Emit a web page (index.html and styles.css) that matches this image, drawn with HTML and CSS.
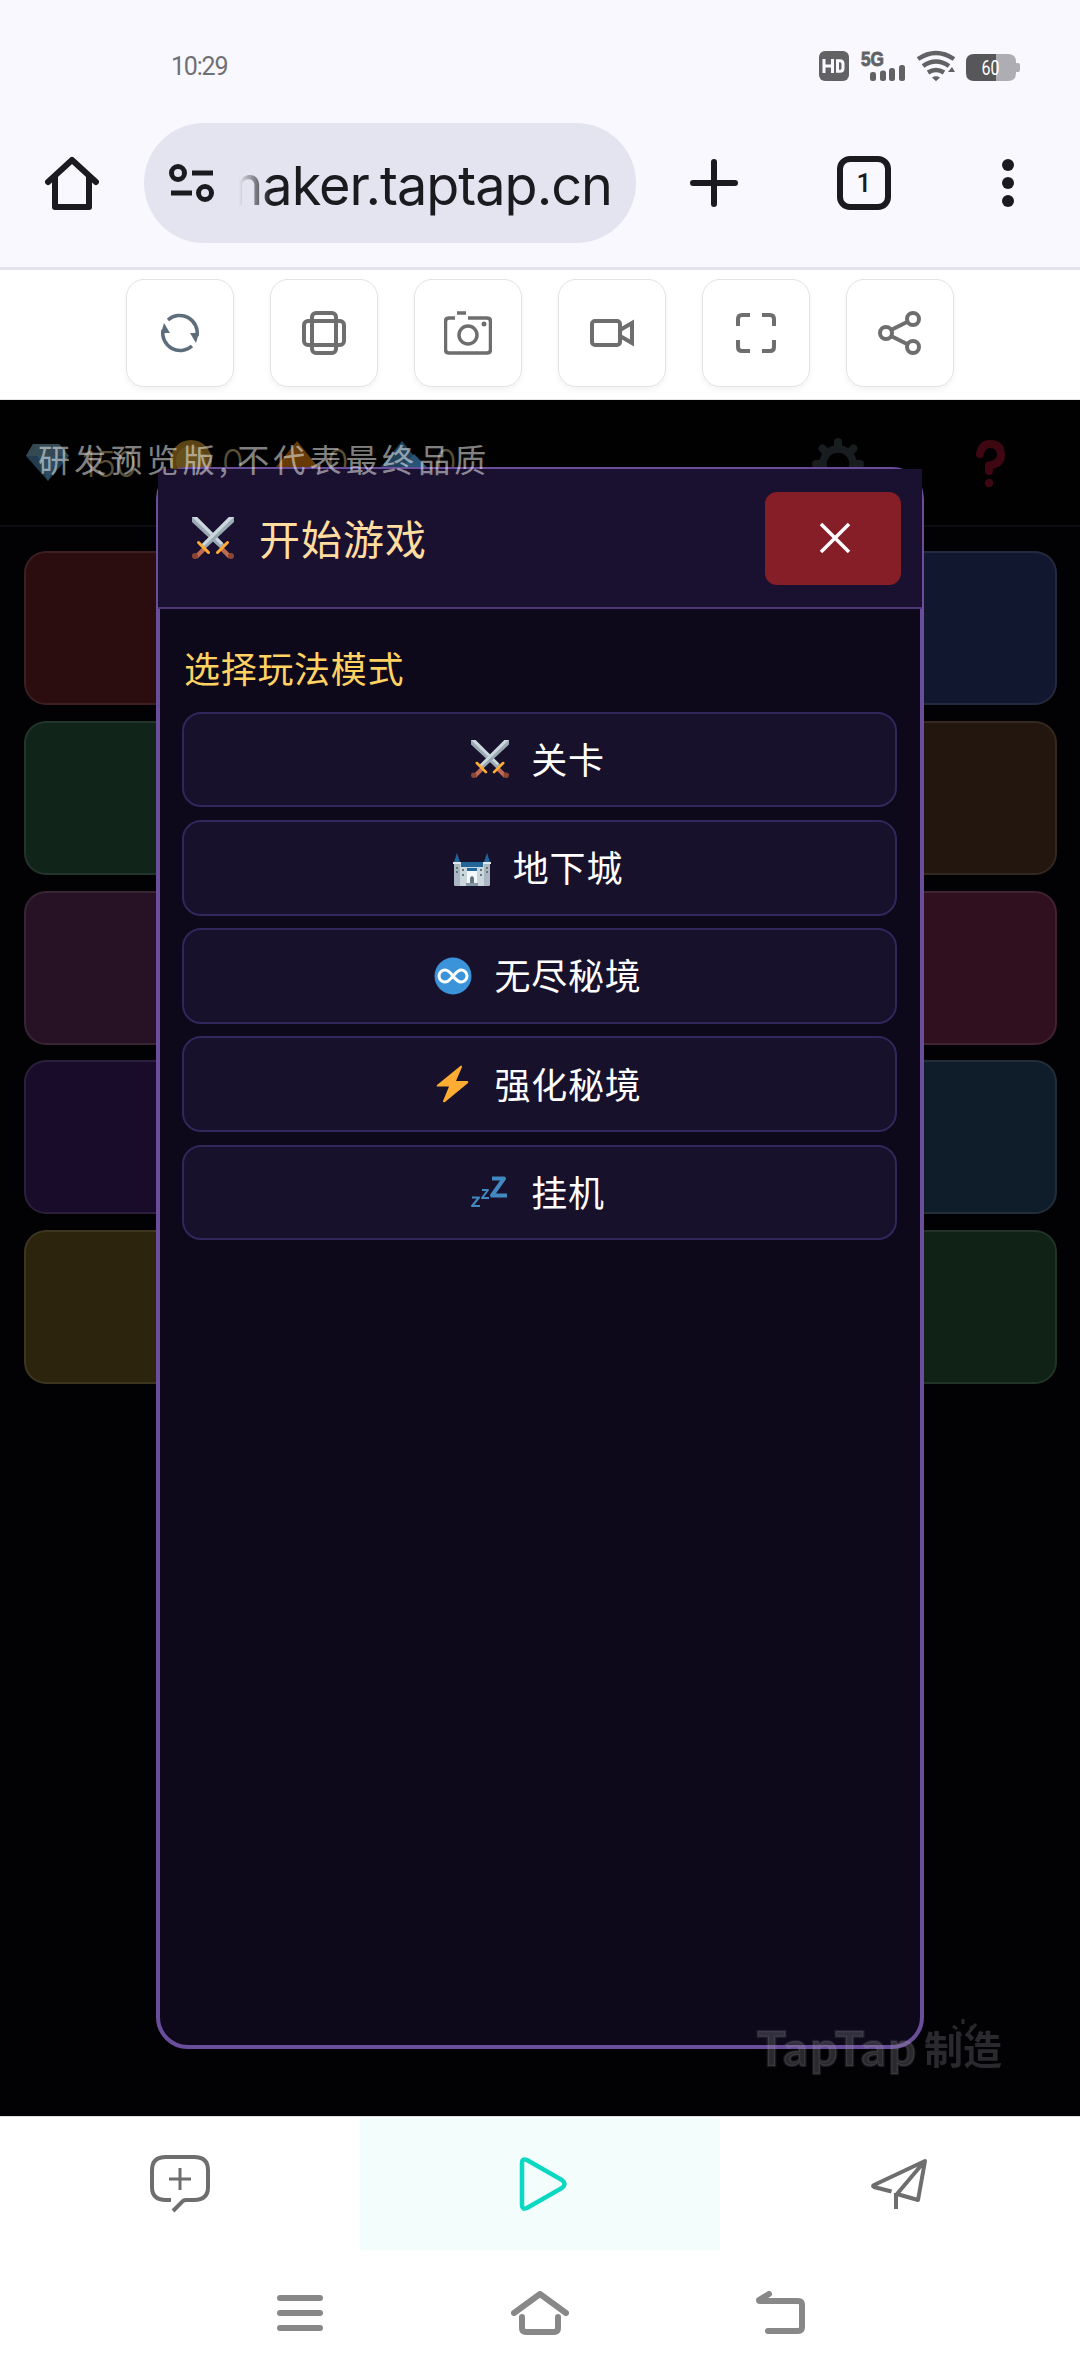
FILE: index.html
```html
<!DOCTYPE html>
<html lang="zh-CN">
<head>
<meta charset="utf-8">
<title>开始游戏</title>
<link rel="stylesheet" href="styles.css">
</head>
<body>
<svg width="0" height="0" class="defs">
  <symbol id="swords" viewBox="0 0 42 42">
    <path d="M0 0h5L33 28l-4 4L0 5z" fill="#9aaab4"/><path d="M0 0h5L31 26l-2 2z" fill="#ccd6dd"/>
    <path d="M42 0h-5L9 28l4 4L42 5z" fill="#9aaab4"/><path d="M42 0h-5L9 28l2 2z" fill="#ccd6dd"/>
    <path d="M12 32l-8 8M30 32l8 8" stroke="#bf6952" stroke-width="4.5"/>
    <path d="M6.500 25.500l10 10M35.500 25.500l-10 10" stroke="#ffac33" stroke-width="3" stroke-linecap="round"/>
    <circle cx="3" cy="39" r="3" fill="#8a4633"/><circle cx="39" cy="39" r="3" fill="#8a4633"/>
  </symbol>
</svg>

<header class="status">
  <time class="clock">10:29</time>
  <svg class="status-icons" viewBox="0 0 204 32" width="204" height="32">
    <g fill="#626264">
      <rect x="1" y="1" width="30" height="30" rx="6"/>
      <path d="M6 9v14M14.500 9v14M6 16h8.500M19.500 10.700h2.500q3 0 3 3v4.600q0 3-3 3h-2.500z" fill="none" stroke="#f9f8ff" stroke-width="3"/>
      <text x="43" y="15.500" class="net" textLength="23" lengthAdjust="spacingAndGlyphs">5G</text>
      <rect x="52" y="22" width="6" height="9" rx="2.500"/><rect x="62" y="20.500" width="6" height="10.500" rx="2.500"/><rect x="71" y="18" width="6" height="13" rx="2.500"/><rect x="81" y="15" width="6" height="16" rx="2.500"/>
      <path d="M100 9q18-12 36 0M105 16q13-9 26 0M110 22.500q8-5 16 0" fill="none" stroke="#626264" stroke-width="4.500"/>
      <path d="M114 27.500q4-2.500 8 0l-4 3.800z"/><path d="M130 22l4-5 3 5z"/>
    </g>
    <path d="M157 4h33q8 0 8 8v11q0 8-8 8h-33z" fill="#aeadb3"/><rect x="197" y="13" width="5" height="9" rx="2" fill="#aeadb3"/>
    <path d="M178 4h-22q-8 0-8 8v11q0 8 8 8h22z" fill="#575759"/>
    <text x="163.500" y="24.500" class="charge" textLength="18" lengthAdjust="spacingAndGlyphs">60</text>
  </svg>
</header>

<nav class="browser">
  <svg class="i-home" viewBox="0 0 54 54" width="54" height="54"><path d="M3 26L27 4l24 22M10 21v30h34V21" class="ink"/></svg>
  <div class="address">
    <svg viewBox="0 0 46 40" width="46" height="40"><g class="ink thin"><circle cx="9" cy="10" r="6.500"/><path d="M23 10h21M2 30h21"/><circle cx="36" cy="30" r="6.500"/></g></svg>
    <div class="url"><span>maker.taptap.cn</span></div>
  </div>
  <svg class="i-plus" viewBox="0 0 48 48" width="48" height="48"><path d="M24 3v42M3 24h42" class="ink"/></svg>
  <div class="tabs">1</div>
  <svg class="i-more" viewBox="0 0 12 50" width="12" height="50"><g fill="#1b1b1f"><circle cx="6" cy="7" r="6"/><circle cx="6" cy="25" r="6"/><circle cx="6" cy="43" r="6"/></g></svg>
</nav>

<div class="tools">
  <button class="tool"><svg viewBox="0 0 48 48" width="48" height="48"><g fill="none" stroke="#5d6d7b" stroke-width="3.500"><path d="M12 11A17.500 17.500 0 0 1 41 27M36 37A17.500 17.500 0 0 1 7 21"/></g><path d="M34 24h9l-3 10zM14 24H5l3-10z" fill="#5d6d7b"/></svg></button>
  <button class="tool"><svg viewBox="0 0 48 48" width="48" height="48"><g class="gray"><rect x="4" y="12" width="40" height="24" rx="4"/><rect x="12" y="4" width="24" height="40" rx="4"/><path d="M12 12h24v24H12z"/></g></svg></button>
  <button class="tool"><svg viewBox="0 0 48 48" width="48" height="48"><g class="gray slim"><path d="M11 9H5q-3.500 0-3.500 3.500v28q0 3.500 3.500 3.500h38q3.500 0 3.500-3.500v-28Q46.500 9 43 9H24M13 4h9"/><circle cx="24" cy="26" r="9"/></g><circle cx="40" cy="15" r="2.500" fill="#6e6e6e"/></svg></button>
  <button class="tool"><svg viewBox="0 0 48 48" width="48" height="48"><g class="gray"><rect x="4" y="12" width="28" height="24" rx="3"/><path d="M32 21l12-7v20l-12-7"/></g></svg></button>
  <button class="tool"><svg viewBox="0 0 48 48" width="48" height="48"><path class="gray" d="M6 17V10q0-4 4-4h8M30 6h8q4 0 4 4v7M42 31v7q0 4-4 4h-8M18 42h-8q-4 0-4-4v-7"/></svg></button>
  <button class="tool"><svg viewBox="0 0 48 48" width="48" height="48"><g class="gray"><circle cx="10" cy="24" r="6"/><circle cx="37" cy="10" r="6"/><circle cx="37" cy="38" r="6"/><path d="M15 21l17-8.500M15 27l17 8.500"/></g></svg></button>
</div>

<main class="game">
  <div class="hud">
    <svg class="res" viewBox="0 0 470 60" width="470" height="60">
      <path d="M13 14h26l10 12-21 25L6 26z" fill="#233d4e"/><path d="M13 14h26l10 12H6z" fill="#344951"/><path d="M18 26l10 25 10-25z" fill="#2c4d63"/>
      <circle cx="171" cy="31" r="21" fill="#5c4316"/><circle cx="171" cy="31" r="15" fill="#66501c"/>
      <path d="M277 11l21 26h-42z" fill="#673b08"/><path d="M382 11l21 26h-42z" fill="#1f415a"/><path d="M394 24l13 13h-24z" fill="#285575"/>
      <g class="amount"><text x="62" y="47" textLength="55" lengthAdjust="spacingAndGlyphs">150</text><text x="202" y="45">0</text><text x="307" y="45">0</text><text x="415" y="45">0</text></g>
    </svg>
    <svg class="gear" viewBox="-26 -26 52 52" width="52" height="52"><circle r="15" fill="none" stroke="#181d1f" stroke-width="7.500"/><path d="M0-22V-17M0 22V17M-22 0h5M22 0h-5M-15.500-15.500l4 4M15.500-15.500l-4 4M-15.500 15.500l4-4M15.500 15.500l-4-4" stroke="#181d1f" stroke-width="8" stroke-linecap="round"/></svg>
    <svg class="help" viewBox="0 0 32 50" width="32" height="50"><path d="M5 15Q7 5 15 5q11 0 11 11 0 9-12 10.500V32" fill="none" stroke="#3f0711" stroke-width="8" stroke-linecap="round" stroke-linejoin="round"/><circle cx="14" cy="44" r="4.300" fill="#3f0711"/></svg>
  </div>
  <div class="cards">
    <i class="red"></i><i class="navy"></i>
    <i class="green"></i><i class="brown"></i>
    <i class="plum"></i><i class="wine"></i>
    <i class="violet"></i><i class="teal"></i>
    <i class="olive"></i><i class="forest"></i>
  </div>

  <section class="modal">
    <div class="modal-head">
      <svg width="42" height="42"><use href="#swords"/></svg>
      <h1>开始游戏</h1>
      <button class="close"><svg viewBox="0 0 32 32" width="32" height="32"><path d="M2 2l28 28M30 2L2 30" stroke="#fff" stroke-width="3.500"/></svg></button>
    </div>
    <div class="modal-body">
      <h2>选择玩法模式</h2>
      <button class="mode"><svg width="38" height="38"><use href="#swords"/></svg><span>关卡</span></button>
      <button class="mode"><svg viewBox="0 0 38 38" width="38" height="38"><path d="M1 13h36v22q0 2-2 2H3q-2 0-2-2z" fill="#ccd6dd"/><path d="M1 15h6v22H3q-2 0-2-2zM31 15h6v20q0 2-2 2h-4z" fill="#aab8c2"/><path d="M8 13h22v5H8z" fill="#226699"/><path d="M1 13L4 4l3 9zM31 13l3-9 3 9z" fill="#226699"/><path d="M0 13h8v2H0zM30 13h8v2h-8z" fill="#e1e8ed"/><path d="M14 22h10v12H14z" fill="#f5f8fa"/><path d="M14 19h10v3H14z" fill="#226699"/><path d="M17 34v-5q2-4 4 0v5z" fill="#66757f"/><path d="M13 34h12v3H13z" fill="#8899a6"/><path d="M3 18h2v2H3zM3 22h2v2H3zM9 20h2v2H9zM9 25h2v2H9zM27 20h2v2h-2zM27 25h2v2h-2zM33 18h2v2h-2zM33 22h2v2h-2z" fill="#66757f"/></svg><span>地下城</span></button>
      <button class="mode"><svg viewBox="0 0 38 38" width="38" height="38"><circle cx="19" cy="19" r="18.500" fill="#3b94d9"/><path d="M19 19c-3-4-5-6-8-6a6 6 0 0 0 0 12c4 0 5-3 8-6s5-6 8-6a6 6 0 0 1 0 12c-3 0-5-2-8-6z" fill="none" stroke="#fff" stroke-width="3"/></svg><span>无尽秘境</span></button>
      <button class="mode"><svg viewBox="0 0 38 38" width="38" height="38"><path d="M27 .5L3 20q-1 1.500 1 1.500h11L9 36q0 2 2 1L34 18q1-2-1-2H22L28 2q0-2-1-1.500z" fill="#ffac33"/></svg><span>强化秘境</span></button>
      <button class="mode"><svg viewBox="0 0 38 38" width="38" height="38"><g fill="none" stroke="#4289c1" stroke-linejoin="round"><path d="M21 5.500h12L21 22.500h15" stroke-width="4"/><path d="M11 17h6l-6 8h7" stroke-width="2"/><path d="M1 24.500h7L1 33h8" stroke-width="2"/></g></svg><span>挂机</span></button>
    </div>
  </section>

  <p class="notice">研发预览版<b>,</b>不代表最终品质</p>
  <div class="watermark"><span class="wm-latin">TapTap</span><span class="wm-cjk">制造</span><svg viewBox="0 0 28 22" width="28" height="22"><path d="M3 20l-2-1M9 17l2 3M3 10l4 3M13 3v5M26 8l-10 12M20 13l3-3" stroke="#29292d" stroke-width="3"/></svg></div>
</main>

<footer class="bottom">
  <div class="tab"><svg viewBox="0 0 60 60" width="60" height="60"><g class="gray"><path d="M21 46h-5Q2 46 2 33V16Q2 3 16 3h28q14 0 14 13v17q0 13-14 13H36q-3 0-5 3l-8 8"/><path d="M30 14v22M19 25h22" stroke-width="3"/></g></svg></div>
  <div class="tab active"><svg viewBox="-3 0 60 60" width="60" height="60"><path d="M9 9v42q0 5 5 3l35-20q5-4 0-8L14 6q-5-2-5 3z" fill="none" stroke="#0bd8c3" stroke-width="4.500"/></svg></div>
  <div class="tab"><svg viewBox="0 0 60 60" width="60" height="60"><path class="gray" d="M21.500 37.500L4 33q-2-1 0-2L55 7 48 46 27 40 54 8M26 39v16" stroke-linejoin="round"/></svg></div>
</footer>
<div class="system">
  <svg viewBox="0 0 46 44" width="46" height="44"><path class="sys" d="M3 7h40M3 22h40M3 37h40"/></svg>
  <svg viewBox="0 0 58 46" width="58" height="46"><path class="sys" d="M3 22L29 3l26 19M11 26v11q0 4 4 4h28q4 0 4-4V26"/></svg>
  <svg viewBox="0 0 50 46" width="50" height="46"><path class="sys" d="M13 3L3 9q0 1 1 1h38q4 0 4 4v22q0 4-4 4H12"/></svg>
</div>
</body>
</html>
```

FILE: styles.css
```css
* { box-sizing: border-box; }
body { margin: 0; width: 1080px; height: 2376px; display: flex; flex-direction: column; background: #fff; font-family: "Noto Sans CJK SC", sans-serif; overflow: hidden; }
h1, h2, p { margin: 0; font-weight: 400; }
button { border: 0; padding: 0; font: inherit; color: inherit; display: flex; align-items: center; justify-content: center; }
svg { display: block; flex: none; }
.defs { position: absolute; }
.ink { fill: none; stroke: #1b1b1f; stroke-width: 6; stroke-linecap: round; stroke-linejoin: round; }
.thin { stroke-width: 5; stroke-linecap: butt; }
.gray { fill: none; stroke: #6e6e6e; stroke-width: 4; }
.slim { stroke-width: 3.5; }
.sys { fill: none; stroke: #888; stroke-width: 6; stroke-linecap: round; stroke-linejoin: round; }

.status { height: 120px; padding: 50px 58px 0 171px; display: flex; justify-content: space-between; background: #f9f8ff; }
.clock { font: 25px/33px Roboto, sans-serif; letter-spacing: -1.2px; color: #707074; }
.net { font: 700 20px "Liberation Sans", sans-serif; stroke: #626264; stroke-width: .8px; }
.charge { font: 20px Roboto, sans-serif; fill: #fff; }

.browser { height: 150px; padding: 3px 66px 0 45px; display: flex; align-items: flex-start; background: #f9f8ff; border-bottom: 3px solid #e2e1ec; }
.i-home { margin-top: 33px; }
.address { margin-left: 45px; width: 492px; height: 120px; border-radius: 60px; background: #e4e4f1; display: flex; align-items: center; padding-left: 25px; }
.url { margin-left: 24px; width: 373px; height: 80px; overflow: hidden; display: flex; justify-content: flex-end; -webkit-mask-image: linear-gradient(90deg, transparent, #000 32px); mask-image: linear-gradient(90deg, transparent, #000 32px); }
.url span { font: 54px/86px Inter, sans-serif; letter-spacing: -1px; color: #1b1b1f; }
.i-plus { margin: 36px 0 0 54px; }
.tabs { margin: 33px 0 0 99px; width: 54px; height: 54px; border: 6px solid #1b1b1f; border-radius: 13px; font: 500 26px/42px Roboto, sans-serif; text-align: center; color: #1b1b1f; }
.i-more { margin: 35px 0 0 111px; }

.tools { height: 130px; padding: 9px 0 0 126px; display: flex; gap: 36px; border-bottom: 1px solid #e5e5e5; }
.tool { width: 108px; height: 108px; border: 1px solid #e4e4e4; border-radius: 18px; background: #fff; box-shadow: 0 3px 6px rgba(0,0,0,.05); }

.game { position: relative; height: 1716px; background: #020205; overflow: hidden; }
.hud { height: 127px; display: flex; border-bottom: 2px solid #0c0c11; padding-left: 20px; background: #010102; }
.res { margin-top: 30px; }
.amount { font: 300 35px Inter, sans-serif; fill: #5a5038; }
.gear { margin: 38px 0 0 322px; }
.help { margin: 39px 0 0 111px; }
.cards { padding: 24px 23px 0 24px; display: grid; grid-template-columns: 1fr 1fr; gap: 15.75px; grid-auto-rows: 154px; }
.cards i { border: 2px solid rgba(255,255,255,.08); border-radius: 22px; }
.red { background: #2b0c0f; } .navy { background: #121730; }
.green { background: #10241a; } .brown { background: #23160e; }
.plum { background: #261224; } .wine { background: #30101f; }
.violet { background: #190c2b; } .teal { background: #0f1d2a; }
.olive { background: #2d240d; } .forest { background: #0f2215; }

.modal { position: absolute; left: 156px; top: 67px; width: 768px; height: 1582px; border: 4px solid #6b4e9b; border-radius: 32px; background: #0d091a; }
.modal-head { margin: -2px -2px 0; height: 140px; background: #1a1030; border-bottom: 2px solid #4e3775; display: flex; align-items: center; padding: 0 21px 0 34px; }
.modal-head h1 { margin-left: 25px; padding-bottom: 3px; font-size: 41px; line-height: 60px; letter-spacing: 1px; color: #ffdc9f; flex: 1; }
.close { width: 136px; height: 93px; border-radius: 12px; background: #861e27; padding-left: 3px; }
.modal-body { padding: 31px 23px 0 22px; display: flex; flex-direction: column; gap: 12.5px; }
.modal-body h2 { padding-left: 2px; margin-bottom: 5px; font-size: 36px; line-height: 54px; letter-spacing: .7px; color: #ffd262; }
.mode { height: 95.75px; padding-right: 3px; border: 2px solid #33265b; border-radius: 19px; background: #18112c; color: #fff; gap: 22px; font-size: 36px; letter-spacing: .8px; }
.mode span { padding-bottom: 3px; }

.notice { position: absolute; left: 38px; top: 36px; font-size: 32px; line-height: 44px; letter-spacing: 4.2px; color: rgba(255,255,255,.52); white-space: nowrap; }
.notice b { font-weight: 400; margin-right: 5px; }
.watermark { position: absolute; left: 757px; top: 1616px; display: flex; color: rgba(150,150,160,.27); filter: blur(.6px); }
.wm-latin { width: 167px; font: 900 48px/63px Lato, sans-serif; letter-spacing: 2.6px; -webkit-text-stroke: 2.5px rgba(150,150,160,.14); }
.wm-cjk { font-size: 39px; line-height: 62px; font-weight: 700; }
.watermark svg { position: absolute; left: 193px; top: 0; }

.bottom { height: 134px; border-top: 1px solid #ddd; padding-top: 1px; display: flex; }
.tab { flex: 1; display: flex; align-items: center; justify-content: center; }
.active { background: #f2fdfc; }
.system { height: 126px; padding: 41px 274px 0 277px; display: flex; justify-content: space-between; }
```
